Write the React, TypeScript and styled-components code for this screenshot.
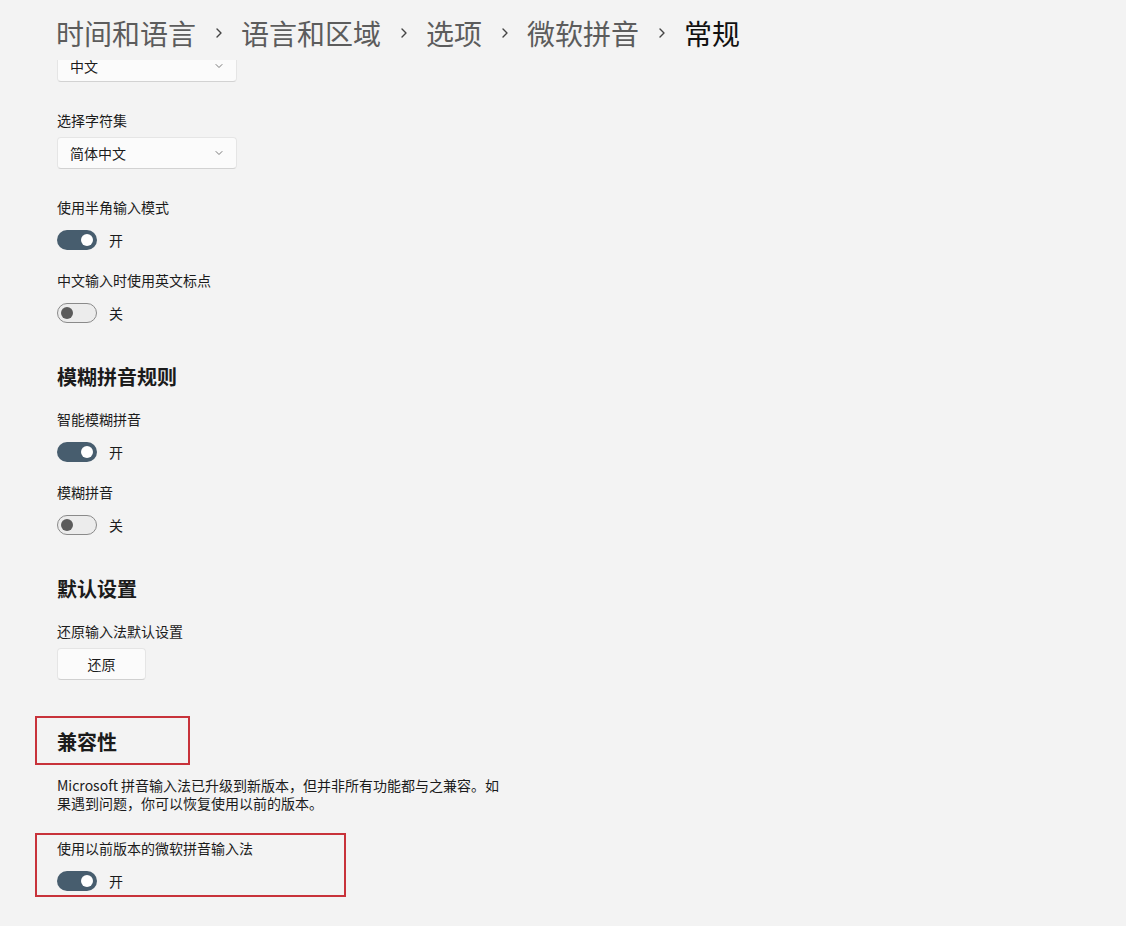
import React from "react";
import styled, { createGlobalStyle } from "styled-components";

const GlobalStyle = createGlobalStyle`
  html, body {
    margin: 0;
    padding: 0;
    background: #f3f3f3;
    font-family: "Noto Sans CJK SC", "Noto Sans", "Liberation Sans", sans-serif;
    color: #1b1b1b;
  }
  * { box-sizing: border-box; }
`;

const Page = styled.div`
  width: 1126px;
  height: 926px;
  display: flex;
  flex-direction: column;
  overflow: hidden;
  background: #f3f3f3;
`;

const Header = styled.header`
  height: 60px;
  flex: none;
  display: flex;
  align-items: center;
  padding: 6px 0 0 56px;
`;

const Crumb = styled.span<{ $current?: boolean }>`
  font-size: 28px;
  line-height: 40px;
  color: ${(p) => (p.$current ? "#111111" : "#5c5c5c")};
  font-weight: 400;
  white-space: nowrap;
`;

const Sep = styled.span`
  display: inline-flex;
  width: 45px;
  justify-content: center;
  align-items: center;
  color: #444;
`;

const Content = styled.main`
  flex: 1;
  overflow: hidden;
  padding-left: 57px;
  display: flex;
  flex-direction: column;
  align-items: flex-start;
`;

const Label = styled.div<{ $top: number }>`
  margin-top: ${(p) => p.$top}px;
  font-size: 14px;
  line-height: 20px;
  color: #1b1b1b;
`;

const SectionTitle = styled.h2<{ $top: number }>`
  margin: ${(p) => p.$top}px 0 0;
  font-size: 20px;
  line-height: 28px;
  font-weight: 600;
  color: #1b1b1b;
`;

const Select = styled.div<{ $top: number }>`
  margin-top: ${(p) => p.$top}px;
  width: 180px;
  height: 32px;
  padding: 0 12px;
  display: flex;
  align-items: center;
  justify-content: space-between;
  background: #fbfbfb;
  border: 1px solid #e5e5e5;
  border-bottom-color: #d2d2d2;
  border-radius: 4px;
  font-size: 14px;
  color: #1b1b1b;
`;

const Chevron = styled.svg`
  width: 10px;
  height: 10px;
  color: #7a7a7a;
`;

const ToggleRow = styled.div<{ $top: number }>`
  margin-top: ${(p) => p.$top}px;
  display: flex;
  align-items: center;
  gap: 12px;
  height: 20px;
  font-size: 14px;
  color: #1b1b1b;
`;

const Track = styled.div<{ $on: boolean }>`
  width: 40px;
  height: 20px;
  border-radius: 10px;
  display: flex;
  align-items: center;
  justify-content: ${(p) => (p.$on ? "flex-end" : "flex-start")};
  background: ${(p) => (p.$on ? "#475d6e" : "#ececec")};
  border: ${(p) => (p.$on ? "none" : "1px solid #8a8a8a")};
  padding: ${(p) => (p.$on ? "0 4px" : "0 3px")};
`;

const Knob = styled.div<{ $on: boolean }>`
  width: 12px;
  height: 12px;
  border-radius: 50%;
  background: ${(p) => (p.$on ? "#ffffff" : "#5b5b5b")};
`;

const Button = styled.button<{ $top: number }>`
  margin-top: ${(p) => p.$top}px;
  width: 89px;
  height: 32px;
  background: #fbfbfb;
  border: 1px solid #e5e5e5;
  border-bottom-color: #d0d0d0;
  border-radius: 4px;
  font-family: inherit;
  font-size: 14px;
  color: #1b1b1b;
  padding: 0;
`;

const Highlight = styled.div<{ $top: number; $w: number; $pt: number; $pb: number }>`
  margin-top: ${(p) => p.$top}px;
  margin-left: -22px;
  width: ${(p) => p.$w}px;
  padding: ${(p) => p.$pt}px 0 ${(p) => p.$pb}px 20px;
  border: 2px solid #c8323a;
  display: flex;
  flex-direction: column;
  align-items: flex-start;
`;

const Paragraph = styled.p<{ $top: number }>`
  margin: ${(p) => p.$top}px 0 0;
  width: 450px;
  font-size: 14px;
  line-height: 18px;
  color: #1b1b1b;
`;

const SepIcon = () => (
  <svg width="10" height="12" viewBox="0 0 10 12" fill="none">
    <path d="M3 2l4 4-4 4" stroke="currentColor" strokeWidth="1.4" strokeLinecap="round" strokeLinejoin="round" />
  </svg>
);

const Dropdown = ({ value, top }: { value: string; top: number }) => (
  <Select $top={top}>
    <span>{value}</span>
    <Chevron viewBox="0 0 10 10" fill="none">
      <path d="M2 3.5l3 3 3-3" stroke="currentColor" strokeWidth="1" strokeLinecap="round" strokeLinejoin="round" />
    </Chevron>
  </Select>
);

const Toggle = ({ on, top }: { on: boolean; top: number }) => (
  <ToggleRow $top={top}>
    <Track $on={on}>
      <Knob $on={on} />
    </Track>
    <span>{on ? "开" : "关"}</span>
  </ToggleRow>
);

export default function App() {
  const crumbs = ["时间和语言", "语言和区域", "选项", "微软拼音"];
  return (
    <>
      <GlobalStyle />
      <Page>
        <Header>
          {crumbs.map((c) => (
            <React.Fragment key={c}>
              <Crumb>{c}</Crumb>
              <Sep>
                <SepIcon />
              </Sep>
            </React.Fragment>
          ))}
          <Crumb $current>常规</Crumb>
        </Header>
        <Content>
          <Dropdown value="中文" top={-10} />
          <Label $top={28}>选择字符集</Label>
          <Dropdown value="简体中文" top={7} />
          <Label $top={28}>使用半角输入模式</Label>
          <Toggle on top={13} />
          <Label $top={20}>中文输入时使用英文标点</Label>
          <Toggle on={false} top={13} />

          <SectionTitle $top={40}>模糊拼音规则</SectionTitle>
          <Label $top={18}>智能模糊拼音</Label>
          <Toggle on top={13} />
          <Label $top={20}>模糊拼音</Label>
          <Toggle on={false} top={13} />

          <SectionTitle $top={40}>默认设置</SectionTitle>
          <Label $top={18}>还原输入法默认设置</Label>
          <Button $top={7}>还原</Button>

          <Highlight $top={36} $w={155} $pt={10} $pb={7}>
            <SectionTitle $top={0}>兼容性</SectionTitle>
          </Highlight>
          <Paragraph $top={11}>
            Microsoft 拼音输入法已升级到新版本，但并非所有功能都与之兼容。如果遇到问题，你可以恢复使用以前的版本。
          </Paragraph>
          <Highlight $top={21} $w={311} $pt={3} $pb={4}>
            <Label $top={0}>使用以前版本的微软拼音输入法</Label>
            <Toggle on top={13} />
          </Highlight>
        </Content>
      </Page>
    </>
  );
}
